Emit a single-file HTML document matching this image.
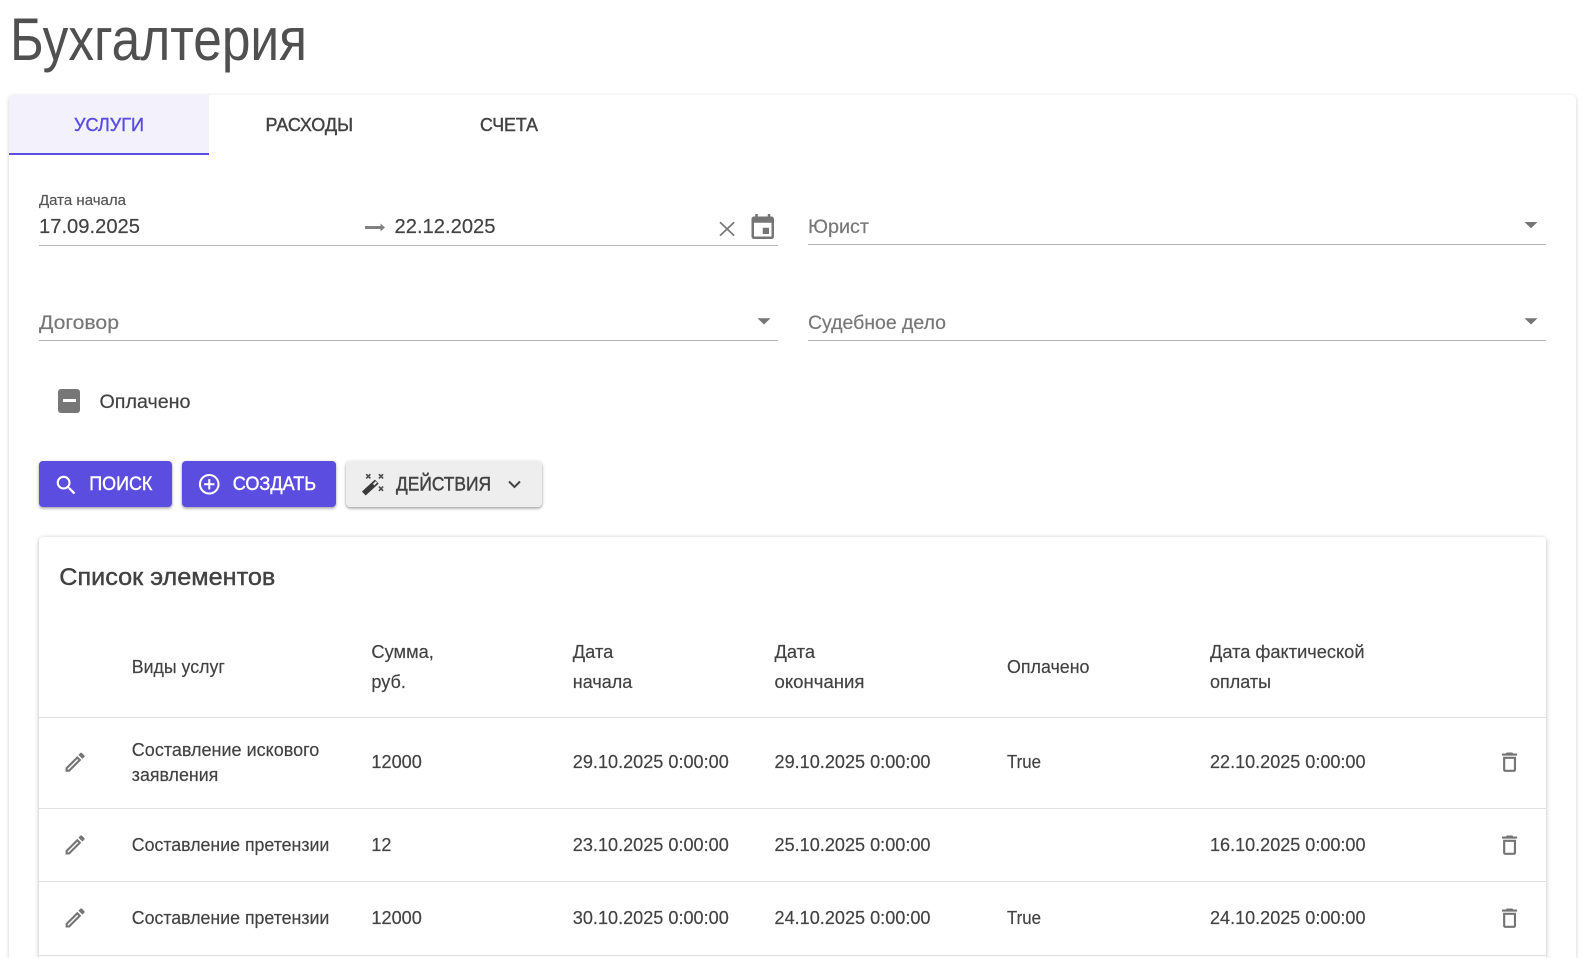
<!DOCTYPE html>
<html lang="ru">
<head>
<meta charset="utf-8">
<title>Бухгалтерия</title>
<style>
html,body{margin:0;padding:0;background:#fff;width:1588px;height:958px;overflow:hidden}
#p{position:relative;width:1588px;height:958px;overflow:hidden;background:#fff}
.a{position:absolute;box-sizing:border-box}
svg{position:absolute;left:0;top:0;display:block}
text{font-family:"Liberation Sans","Noto Sans CJK SC",sans-serif;font-size:18.5px;color:#424242;fill:currentColor;stroke:currentColor;stroke-width:.18px}
.line{height:1px;background:#b4b4b4}
.row{left:39px;width:1507px;height:1px;background:#e0e0e0}
.btn{top:461px;height:46px;border-radius:4px;background:#5a4de0;box-shadow:0 1px 3px rgba(0,0,0,.3),0 2px 2px rgba(0,0,0,.12)}
.m{stroke-width:.42px}
</style>
</head>
<body>
<div id="p">
<div class="a" style="left:9px;top:95px;width:1567px;height:863px;background:#fff;border-radius:4px 4px 0 0;box-shadow:0 1px 4px rgba(0,0,0,.18)"></div>
<div class="a" style="left:9px;top:95px;width:200px;height:60px;background:#f3f2fc;border-bottom:2px solid #5a4de0;border-top-left-radius:4px"></div>
<div class="a line" style="left:39px;top:245px;width:739px"></div>
<div class="a line" style="left:808px;top:244px;width:738px"></div>
<div class="a line" style="left:39px;top:340px;width:739px"></div>
<div class="a line" style="left:808px;top:340px;width:738px"></div>
<div class="a" style="left:58px;top:389px;width:22px;height:23.5px;background:#777;border-radius:3px"></div>
<div class="a" style="left:62.5px;top:399.3px;width:13px;height:3px;background:#fff"></div>
<div class="a btn" style="left:39px;width:133px"></div>
<div class="a btn" style="left:182px;width:154px"></div>
<div class="a btn" style="left:346px;width:196px;background:#eee"></div>
<div class="a" style="left:39px;top:537px;width:1507px;height:421px;background:#fff;border-radius:4px 4px 0 0;box-shadow:0 1px 5px rgba(0,0,0,.28)"></div>
<div class="a row" style="top:717px"></div>
<div class="a row" style="top:808px"></div>
<div class="a row" style="top:881px"></div>
<div class="a row" style="top:955px"></div>

<svg width="1588" height="958" viewBox="0 0 1588 958" xmlns="http://www.w3.org/2000/svg">
<defs>
<path id="pen" d="M14.06 9.02l.92.92L5.92 19H5v-.92l9.06-9.06M17.66 3c-.25 0-.51.1-.7.29l-1.83 1.83 3.75 3.75 1.83-1.83c.39-.39.39-1.02 0-1.41l-2.34-2.34c-.2-.2-.45-.29-.71-.29zm-3.6 3.19L3 17.25V21h3.75L17.81 9.94l-3.75-3.75z"/>
<path id="del" d="M6 19c0 1.1.9 2 2 2h8c1.1 0 2-.9 2-2V7H6v12zM8 9h8v10H8V9zm7.5-5l-1-1h-5l-1 1H5v2h14V4z"/>
</defs>

<text x="10" y="60" style="font-size:60px;color:#505050;stroke-width:0" textLength="297" lengthAdjust="spacingAndGlyphs">Бухгалтерия</text>

<text x="74" y="131" class="m" style="font-size:18px;color:#5a4de0" textLength="70" lengthAdjust="spacingAndGlyphs">УСЛУГИ</text>
<text x="265.5" y="131" class="m" style="font-size:18px" textLength="87.5" lengthAdjust="spacingAndGlyphs">РАСХОДЫ</text>
<text x="480" y="131" class="m" style="font-size:18px" textLength="58" lengthAdjust="spacingAndGlyphs">СЧЕТА</text>

<text x="39" y="205" style="font-size:15px;color:#555" textLength="87" lengthAdjust="spacingAndGlyphs">Дата начала</text>
<text x="39" y="233" style="font-size:20.5px" textLength="101" lengthAdjust="spacingAndGlyphs">17.09.2025</text>
<path d="M365 226h15.5v-2.5l4.5 4-4.5 4V229H365z" fill="#808080"/>
<text x="394.5" y="233" style="font-size:20.5px" textLength="101" lengthAdjust="spacingAndGlyphs">22.12.2025</text>
<path d="M720 222.2L734.2 235.6M734.2 222.2L720 235.6" fill="none" stroke="#777" stroke-width="1.7"/>
<g transform="translate(747.75 212.75) scale(1.25)" fill="#757575"><path d="M17 12h-5v5h5v-5zM16 1v2H8V1H6v2H5c-1.11 0-1.99.9-1.99 2L3 19c0 1.1.89 2 2 2h14c1.1 0 2-.9 2-2V5c0-1.1-.9-2-2-2h-1V1h-2zm3 18H5V8h14v11z"/></g>

<text x="808" y="233" style="font-size:19.5px;color:#777" textLength="61" lengthAdjust="spacingAndGlyphs">Юрист</text>
<path d="M1524.5 222h13l-6.5 6.2z" fill="#757575"/>
<text x="39" y="329" style="font-size:19.5px;color:#777" textLength="80" lengthAdjust="spacingAndGlyphs">Договор</text>
<path d="M757.5 318.3h13l-6.5 6.2z" fill="#757575"/>
<text x="808" y="329" style="font-size:19.5px;color:#777" textLength="138" lengthAdjust="spacingAndGlyphs">Судебное дело</text>
<path d="M1524.5 318.3h13l-6.5 6.2z" fill="#757575"/>

<text x="99.5" y="408" style="font-size:19px" textLength="91" lengthAdjust="spacingAndGlyphs">Оплачено</text>

<g transform="translate(53.5 472.5) scale(1.065)" fill="#fff"><path d="M15.5 14h-.79l-.28-.27C15.41 12.59 16 11.11 16 9.5 16 5.91 13.09 3 9.5 3S3 5.91 3 9.5 5.91 16 9.5 16c1.61 0 3.09-.59 4.23-1.57l.27.28v.79l5 4.99L20.49 19l-4.99-5zm-6 0C7.01 14 5 11.99 5 9.5S7.01 5 9.5 5 14 7.01 14 9.5 11.99 14 9.5 14z"/></g>
<text x="89.3" y="490" class="m" style="font-size:19px;color:#fff" textLength="63" lengthAdjust="spacingAndGlyphs">ПОИСК</text>
<g transform="translate(196.9 471.9) scale(1.03)" fill="#fff"><path d="M13 7h-2v4H7v2h4v4h2v-4h4v-2h-4V7zm-1-5C6.48 2 2 6.48 2 12s4.48 10 10 10 10-4.48 10-10S17.52 2 12 2zm0 18c-4.41 0-8-3.59-8-8s3.59-8 8-8 8 3.59 8 8-3.59 8-8 8z"/></g>
<text x="232.7" y="490" class="m" style="font-size:19px;color:#fff" textLength="83.5" lengthAdjust="spacingAndGlyphs">СОЗДАТЬ</text>

<g fill="none">
<path d="M363.8 493.5L376.8 481.6" stroke="#3a3a3a" stroke-width="5.5"/>
<path d="M373.6 484.6L376.4 482" stroke="#eee" stroke-width="2"/>
<path d="M366.2 474.2l4.2 4.2M370.4 474.2l-4.2 4.2M378.9 474.2l4.2 4.2M383.1 474.2l-4.2 4.2M378.9 486.6l4.2 4.2M383.1 486.6l-4.2 4.2" stroke="#4a4a4a" stroke-width="1.6"/>
</g>
<text x="396" y="490.5" class="m" style="font-size:19px" textLength="95" lengthAdjust="spacingAndGlyphs">ДЕЙСТВИЯ</text>
<path d="M509 481.5l5.5 5.5 5.5-5.5" fill="none" stroke="#444" stroke-width="2"/>

<text x="59.3" y="585" class="m" style="font-size:24.5px" textLength="216" lengthAdjust="spacingAndGlyphs">Список элементов</text>

<text x="131.8" y="673" textLength="93" lengthAdjust="spacingAndGlyphs">Виды услуг</text>
<text x="371.4" y="658" textLength="62.5" lengthAdjust="spacingAndGlyphs">Сумма,</text>
<text x="371.4" y="688" textLength="34.5" lengthAdjust="spacingAndGlyphs">руб.</text>
<text x="572.8" y="658" textLength="40.5" lengthAdjust="spacingAndGlyphs">Дата</text>
<text x="572.8" y="688" textLength="59.5" lengthAdjust="spacingAndGlyphs">начала</text>
<text x="774.5" y="658" textLength="40.5" lengthAdjust="spacingAndGlyphs">Дата</text>
<text x="774.5" y="688" textLength="90" lengthAdjust="spacingAndGlyphs">окончания</text>
<text x="1007" y="673" textLength="82.5" lengthAdjust="spacingAndGlyphs">Оплачено</text>
<text x="1210" y="658" textLength="154.5" lengthAdjust="spacingAndGlyphs">Дата фактической</text>
<text x="1210" y="688" textLength="61" lengthAdjust="spacingAndGlyphs">оплаты</text>

<text x="131.8" y="756" textLength="187.5" lengthAdjust="spacingAndGlyphs">Составление искового</text>
<text x="131.8" y="781" textLength="86.5" lengthAdjust="spacingAndGlyphs">заявления</text>
<text x="371.4" y="768" textLength="50.5" lengthAdjust="spacingAndGlyphs">12000</text>
<text x="572.8" y="768" textLength="156" lengthAdjust="spacingAndGlyphs">29.10.2025 0:00:00</text>
<text x="774.5" y="768" textLength="156" lengthAdjust="spacingAndGlyphs">29.10.2025 0:00:00</text>
<text x="1007" y="768" textLength="34" lengthAdjust="spacingAndGlyphs">True</text>
<text x="1210" y="768" textLength="155.5" lengthAdjust="spacingAndGlyphs">22.10.2025 0:00:00</text>

<text x="131.8" y="851" textLength="197.5" lengthAdjust="spacingAndGlyphs">Составление претензии</text>
<text x="371.4" y="851" textLength="20" lengthAdjust="spacingAndGlyphs">12</text>
<text x="572.8" y="851" textLength="156" lengthAdjust="spacingAndGlyphs">23.10.2025 0:00:00</text>
<text x="774.5" y="851" textLength="156" lengthAdjust="spacingAndGlyphs">25.10.2025 0:00:00</text>
<text x="1210" y="851" textLength="155.5" lengthAdjust="spacingAndGlyphs">16.10.2025 0:00:00</text>

<text x="131.8" y="924" textLength="197.5" lengthAdjust="spacingAndGlyphs">Составление претензии</text>
<text x="371.4" y="924" textLength="50.5" lengthAdjust="spacingAndGlyphs">12000</text>
<text x="572.8" y="924" textLength="156" lengthAdjust="spacingAndGlyphs">30.10.2025 0:00:00</text>
<text x="774.5" y="924" textLength="156" lengthAdjust="spacingAndGlyphs">24.10.2025 0:00:00</text>
<text x="1007" y="924" textLength="34" lengthAdjust="spacingAndGlyphs">True</text>
<text x="1210" y="924" textLength="155.5" lengthAdjust="spacingAndGlyphs">24.10.2025 0:00:00</text>

<g fill="#757575">
<use href="#pen" transform="translate(62.4 749.5) scale(1.06)"/>
<use href="#pen" transform="translate(62.4 832.2) scale(1.06)"/>
<use href="#pen" transform="translate(62.4 905.2) scale(1.06)"/>
<use href="#del" transform="translate(1496.6 749.2) scale(1.08)"/>
<use href="#del" transform="translate(1496.6 832.2) scale(1.08)"/>
<use href="#del" transform="translate(1496.6 905.2) scale(1.08)"/>
</g>
</svg>
</div>
</body>
</html>
